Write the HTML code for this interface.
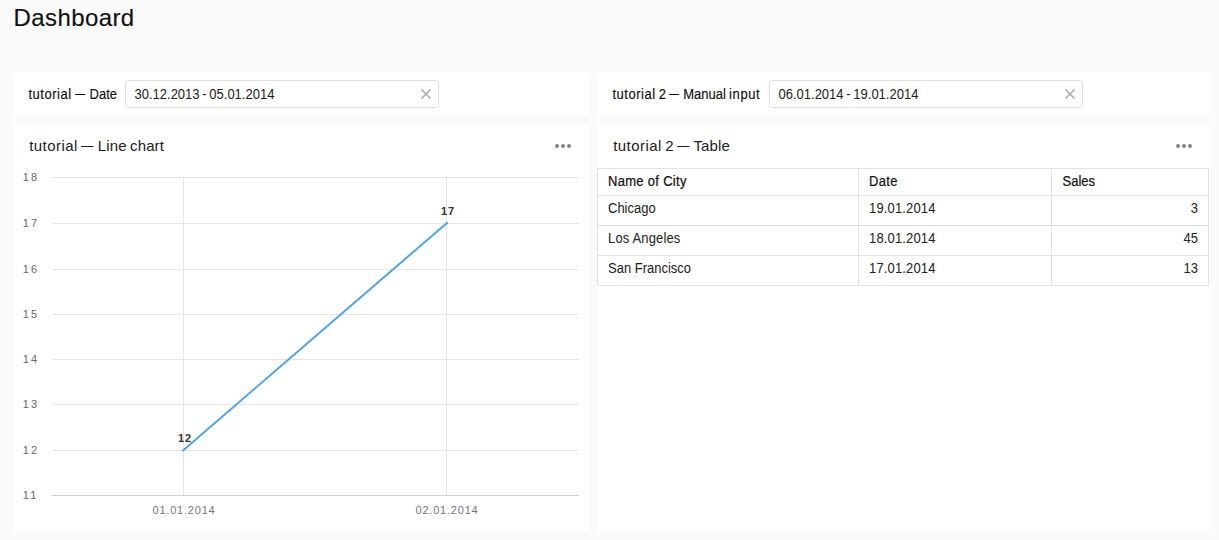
<!DOCTYPE html>
<html><head><meta charset="utf-8"><title>Dashboard</title>
<style>
html,body{margin:0;padding:0;}
body{width:1219px;height:540px;overflow:hidden;background:#fafafa;font-family:"Liberation Sans",sans-serif;color:#1a1a1a;position:relative;}
.abs{position:absolute;}
h1{position:absolute;left:13.6px;top:4px;margin:0;font-size:24px;font-weight:normal;line-height:28px;color:#111;letter-spacing:0.4px;-webkit-text-stroke:0.15px #111;}
.card{position:absolute;background:#fff;border-radius:3px;}
.lbl{position:absolute;font-size:13px;line-height:16px;top:14.6px;transform:scaleY(1.1);transform-origin:0 12.5px;white-space:nowrap;color:#111;-webkit-text-stroke:0.15px #111;}
.w{letter-spacing:0.5px;}
.d{display:inline-block;position:relative;top:-1.4px;transform:scaleX(0.77);transform-origin:0 50%;margin-right:-2.2px;}
.title .d{top:-0.9px;transform:scaleX(0.82);margin-right:-2px;}
.title .w{letter-spacing:0.45px;}
.inp{position:absolute;top:8px;height:26px;border:1px solid #e0e0e0;border-radius:3px;background:#fff;box-sizing:content-box;}
.inp span{position:absolute;transform:scaleY(1.1);transform-origin:0 3px;word-spacing:-0.9px;left:8.5px;top:5px;font-size:13px;line-height:16px;white-space:nowrap;color:#222;}
.inp svg{position:absolute;right:7px;top:8px;}
.title{position:absolute;left:16.2px;top:13px;word-spacing:-0.8px;letter-spacing:0.1px;font-size:15px;line-height:18px;white-space:nowrap;color:#222;}
.dots{position:absolute;top:20px;}
table{position:absolute;left:0;top:44px;border-collapse:collapse;font-size:13px;color:#222;}
td,th{border:1px solid #e2e2e2;padding:0 10px 4px 10px;height:25px;text-align:left;font-weight:normal;white-space:nowrap;}
th{height:24px;padding-bottom:2px;color:#111;-webkit-text-stroke:0.2px #111;letter-spacing:0.3px;}
.t{display:inline-block;position:relative;top:-0.8px;transform:scaleY(1.1);transform-origin:0 3px;}
td.s{letter-spacing:0.15px;}
td.n{text-align:right;letter-spacing:0;}
</style></head><body>
<h1>Dashboard</h1>

<div class="card" style="left:13px;top:72px;width:576px;height:44px;">
  <div class="lbl" style="left:15.5px;"><span class="w">tutorial</span> <span class="d">—</span> Date</div>
  <div class="inp" style="left:112px;width:312px;"><span>30.12.2013 - 05.01.2014</span>
    <svg width="10" height="10" viewBox="0 0 10 10"><path d="M0.5 0.5L9.5 9.5M9.5 0.5L0.5 9.5" stroke="#a8a8a8" stroke-width="1.5" fill="none"/></svg></div>
</div>

<div class="card" style="left:597px;top:72px;width:613px;height:44px;">
  <div class="lbl" style="left:15.5px;word-spacing:-0.4px;"><span class="w">tutorial</span> 2 <span class="d">—</span> Manual <span style="letter-spacing:0.6px">input</span></div>
  <div class="inp" style="left:172px;width:312px;"><span>06.01.2014 - 19.01.2014</span>
    <svg width="10" height="10" viewBox="0 0 10 10"><path d="M0.5 0.5L9.5 9.5M9.5 0.5L0.5 9.5" stroke="#a8a8a8" stroke-width="1.5" fill="none"/></svg></div>
</div>

<div class="card" style="left:13px;top:124px;width:576px;height:408px;">
  <div class="title"><span class="w">tutorial</span> <span class="d">—</span> Line chart</div>
  <svg class="dots" style="left:542px;" width="16" height="4" viewBox="0 0 16 4"><circle cx="2" cy="2" r="1.9" fill="#7d7d7d"/><circle cx="8" cy="2" r="1.9" fill="#7d7d7d"/><circle cx="14" cy="2" r="1.9" fill="#7d7d7d"/></svg>
  <svg class="abs" style="left:0;top:0;" width="576" height="408" viewBox="13 124 576 408" font-family="Liberation Sans, sans-serif">
    <g stroke="#e6e6e6" stroke-width="1" shape-rendering="crispEdges">
      <line x1="52" x2="579" y1="177.5" y2="177.5"/>
      <line x1="52" x2="579" y1="223.5" y2="223.5"/>
      <line x1="52" x2="579" y1="269.5" y2="269.5"/>
      <line x1="52" x2="579" y1="314.5" y2="314.5"/>
      <line x1="52" x2="579" y1="359.5" y2="359.5"/>
      <line x1="52" x2="579" y1="404.5" y2="404.5"/>
      <line x1="52" x2="579" y1="450.5" y2="450.5"/>
      <line x1="183.5" x2="183.5" y1="177" y2="495"/>
      <line x1="446.5" x2="446.5" y1="177" y2="495"/>
    </g>
    <line x1="52" x2="579" y1="495.5" y2="495.5" stroke="#cfcfcf" shape-rendering="crispEdges"/>
    <path d="M183 450.4L447 222.9" stroke="#4da2f1" stroke-width="2" stroke-linecap="round" fill="none"/>
    <g font-size="11" fill="#6b6474" letter-spacing="2.2">
      <text x="22.8" y="181">18</text><text x="22.8" y="227">17</text><text x="22.8" y="273">16</text><text x="22.8" y="318">15</text>
      <text x="22.8" y="363">14</text><text x="22.8" y="408">13</text><text x="22.8" y="454">12</text><text x="22.8" y="499">11</text>
    </g>
    <g font-size="11" fill="#777" letter-spacing="0.8" text-anchor="middle">
      <text x="184" y="514">01.01.2014</text><text x="447" y="514">02.01.2014</text>
    </g>
    <g font-size="11" font-weight="bold" fill="#333" letter-spacing="0.8">
      <text x="178" y="442">12</text><text x="441" y="215">17</text>
    </g>
  </svg>
</div>

<div class="card" style="left:597px;top:124px;width:613px;height:408px;">
  <div class="title"><span class="w">tutorial</span> 2 <span class="d">—</span> Table</div>
  <svg class="dots" style="left:579px;" width="16" height="4" viewBox="0 0 16 4"><circle cx="2" cy="2" r="1.9" fill="#7d7d7d"/><circle cx="8" cy="2" r="1.9" fill="#7d7d7d"/><circle cx="14" cy="2" r="1.9" fill="#7d7d7d"/></svg>
  <table style="width:612px;">
    <tr><th style="width:240px;"><span class="t">Name of City</span></th><th style="width:172px;"><span class="t">Date</span></th><th style="letter-spacing:0;padding-left:10.5px;"><span class="t">Sales</span></th></tr>
    <tr><td><span class="t">Chicago</span></td><td class="s"><span class="t">19.01.2014</span></td><td class="n"><span class="t">3</span></td></tr>
    <tr><td class="s"><span class="t">Los Angeles</span></td><td class="s"><span class="t">18.01.2014</span></td><td class="n"><span class="t">45</span></td></tr>
    <tr><td><span class="t">San Francisco</span></td><td class="s"><span class="t">17.01.2014</span></td><td class="n"><span class="t">13</span></td></tr>
  </table>
</div>
</body></html>
